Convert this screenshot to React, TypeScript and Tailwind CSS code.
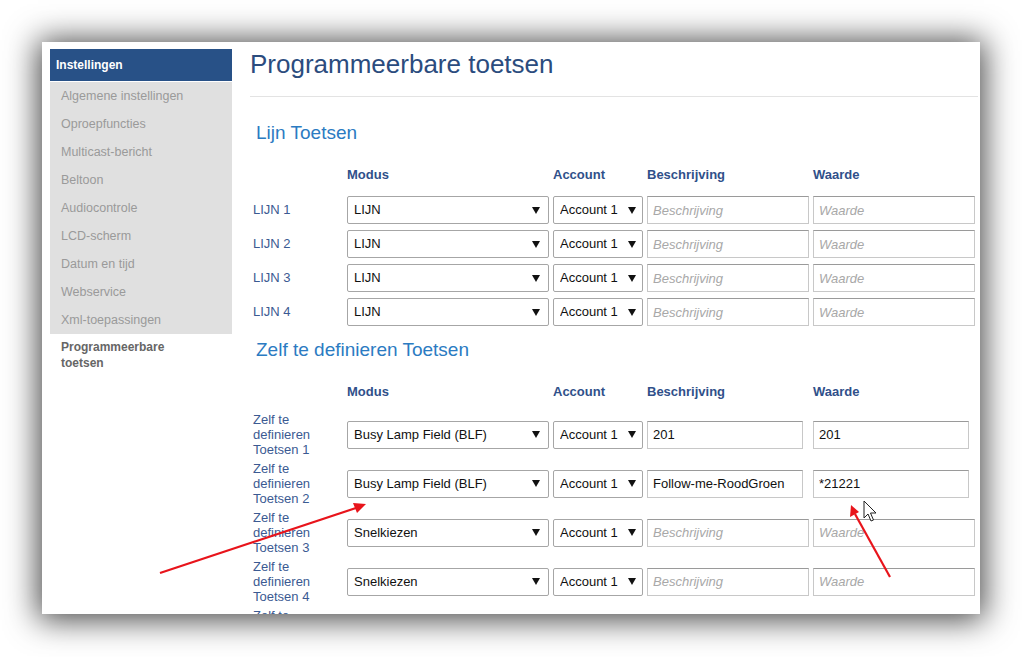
import React from "react";

const menuItems = [
  "Algemene instellingen",
  "Oproepfuncties",
  "Multicast-bericht",
  "Beltoon",
  "Audiocontrole",
  "LCD-scherm",
  "Datum en tijd",
  "Webservice",
  "Xml-toepassingen",
];

const lineRows = ["LIJN 1", "LIJN 2", "LIJN 3", "LIJN 4"];

const customRows = [
  { n: 1, modus: "Busy Lamp Field (BLF)", desc: "201", value: "201" },
  { n: 2, modus: "Busy Lamp Field (BLF)", desc: "Follow-me-RoodGroen", value: "*21221" },
  { n: 3, modus: "Snelkiezen", desc: "", value: "" },
  { n: 4, modus: "Snelkiezen", desc: "", value: "" },
  { n: 5, modus: "Snelkiezen", desc: "", value: "" },
];

const Caret = () => (
  <svg width="8" height="7" viewBox="0 0 8 7" className="shrink-0">
    <polygon points="0,0 8,0 4,7" fill="#111" />
  </svg>
);

const FakeSelect = ({ text, width, pr }: { text: string; width: string; pr: string }) => (
  <div
    className={`${width} ${pr} h-[28px] flex items-center justify-between pl-[6px] border border-[#a6a6a6] rounded-[2px] bg-white text-[13px] text-[#111]`}
  >
    <span className="truncate">{text}</span>
    <Caret />
  </div>
);

const Field = ({ value, placeholder, narrow }: { value: string; placeholder: string; narrow?: boolean }) => (
  <div className="w-[162px] ml-[4px]">
    <input
      readOnly
      defaultValue={value}
      placeholder={placeholder}
      className={`${narrow ? "w-[156px]" : "w-[162px]"} h-[28px] px-[5px] border border-[#c8c8c8] border-t-[#9a9a9a] bg-white text-[13px] text-[#111] outline-none placeholder:italic placeholder:text-[#a8a8a8]`}
    />
  </div>
);

const Fields = ({ desc, value }: { desc: string; value: string }) => (
  <>
    <Field value={desc} placeholder="Beschrijving" narrow={!!value} />
    <Field value={value} placeholder="Waarde" narrow={!!value} />
  </>
);

const HeaderRow = () => (
  <div className="flex pl-[3px] h-[16px] items-center text-[13px] font-bold text-[#30508a]">
    <div className="w-[94px]" />
    <div className="w-[202px]">Modus</div>
    <div className="w-[90px] ml-[4px]">Account</div>
    <div className="w-[162px] ml-[4px]">Beschrijving</div>
    <div className="w-[162px] ml-[4px]">Waarde</div>
  </div>
);

export default function App() {
  return (
    <div
      className="relative w-[1022px] h-[657px] overflow-hidden bg-white pl-[42px] pt-[42px]"
      style={{ fontFamily: '"Liberation Sans", Arial, sans-serif' }}
    >
      <div className="w-[938px] h-[572px] bg-white overflow-hidden flex pl-[8px] pt-[7px] shadow-[0_2px_30px_4px_rgba(0,0,0,0.72)]">
        {/* sidebar */}
        <div className="w-[182px] shrink-0">
          <div className="h-[32px] bg-[#285187] pl-[6px] flex items-center text-white font-bold text-[12px]">
            Instellingen
          </div>
          <div className="mt-px bg-[#e0e0e0]">
            {menuItems.map((m) => (
              <div key={m} className="h-[28px] pl-[11px] flex items-center text-[12.5px] text-[#9a9a9a]">
                {m}
              </div>
            ))}
          </div>
          <div className="pl-[11px] pt-[5px] text-[12px] leading-[16px] font-bold text-[#666]">
            Programmeerbare
            <br />
            toetsen
          </div>
        </div>

        {/* main */}
        <div className="ml-[18px] w-[728px]">
          <div className="h-[47px] text-[26px] leading-[30px] text-[#2b4c7e]">Programmeerbare toetsen</div>
          <div className="h-px bg-[#e3e3e3]" />

          <div className="mt-[24px] pl-[6px] text-[19px] leading-[24px] text-[#2b7bc2]">Lijn Toetsen</div>
          <div className="mt-[22px]">
            <HeaderRow />
          </div>
          <div className="mt-[13px] flex flex-col gap-[6px]">
            {lineRows.map((l) => (
              <div key={l} className="flex items-center pl-[3px]">
                <div className="w-[94px] text-[13px] text-[#3b5a92]">{l}</div>
                <FakeSelect text="LIJN" width="w-[202px]" pr="pr-[8px]" />
                <div className="ml-[4px]">
                  <FakeSelect text="Account 1" width="w-[90px]" pr="pr-[6px]" />
                </div>
                <Fields desc="" value="" />
              </div>
            ))}
          </div>

          <div className="mt-[12px] pl-[6px] text-[19px] leading-[24px] text-[#2b7bc2]">
            Zelf te definieren Toetsen
          </div>
          <div className="mt-[22px]">
            <HeaderRow />
          </div>
          <div className="mt-[10px] flex flex-col">
            {customRows.map((r) => (
              <div key={r.n} className="flex items-center pl-[3px] py-[2px]">
                <div className="w-[94px]">
                  <div className="w-[80px] text-[13px] leading-[15px] text-[#3b5a92]">
                    Zelf te definieren Toetsen {r.n}
                  </div>
                </div>
                <FakeSelect text={r.modus} width="w-[202px]" pr="pr-[8px]" />
                <div className="ml-[4px]">
                  <FakeSelect text="Account 1" width="w-[90px]" pr="pr-[6px]" />
                </div>
                <Fields desc={r.desc} value={r.value} />
              </div>
            ))}
          </div>
        </div>
      </div>

      {/* annotations */}
      <svg className="absolute left-0 top-0 pointer-events-none" width="1022" height="657" viewBox="0 0 1022 657">
        <line x1="160" y1="573" x2="356" y2="508" stroke="#e8141b" strokeWidth="2.2" />
        <polygon points="366,504 353,503 357,513" fill="#e8141b" />
        <line x1="890" y1="577" x2="855" y2="514" stroke="#e8141b" strokeWidth="2.2" />
        <polygon points="851,505 850,517 859,512" fill="#e8141b" />
        <path
          d="M864 501 L864 518 L868 514 L871 521 L873.5 520 L870.5 513 L876 513 Z"
          fill="#fff"
          stroke="#222"
          strokeWidth="1"
          strokeLinejoin="round"
        />
      </svg>
    </div>
  );
}
